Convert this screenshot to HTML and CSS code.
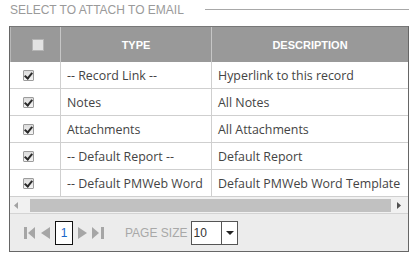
FILE: index.html
```html
<!DOCTYPE html>
<html lang="en">

<head>
  <meta charset="UTF-8">
  <meta name="viewport" content="width=device-width, initial-scale=1.0">
  <title>Attach to Email</title>
  <link rel="stylesheet" href="styles.css">
</head>

<body>
  <div class="panel">
    <div class="legend"><span>Select to attach to email</span></div>

    <div class="grid">
      <div class="head">
        <div class="cell check-cell head-check">
          <svg class="box-empty" width="12" height="12" viewBox="0 0 12 12">
            <rect x="0.5" y="0.5" width="11" height="11" fill="#e2e2e2" stroke="#b4b4b4"/>
          </svg>
        </div>
        <div class="cell">Type</div>
        <div class="cell">Description</div>
      </div>

      <div class="row">
        <div class="cell check-cell"><span class="tick"></span></div>
        <div class="cell">-- Record Link --</div>
        <div class="cell">Hyperlink to this record</div>
      </div>
      <div class="row">
        <div class="cell check-cell"><span class="tick"></span></div>
        <div class="cell">Notes</div>
        <div class="cell">All Notes</div>
      </div>
      <div class="row">
        <div class="cell check-cell"><span class="tick"></span></div>
        <div class="cell">Attachments</div>
        <div class="cell">All Attachments</div>
      </div>
      <div class="row">
        <div class="cell check-cell"><span class="tick"></span></div>
        <div class="cell">-- Default Report --</div>
        <div class="cell">Default Report</div>
      </div>
      <div class="row">
        <div class="cell check-cell"><span class="tick"></span></div>
        <div class="cell"><span class="clip">-- Default PMWeb Word</span></div>
        <div class="cell">Default PMWeb Word Template</div>
      </div>

      <!-- horizontal scrollbar -->
      <div class="hscroll">
        <svg width="4" height="7" viewBox="0 0 4 7"><path d="M4 0 L0 3.5 L4 7 Z" fill="#a3a3a3"/></svg>
        <div class="thumb"></div>
        <svg width="4" height="7" viewBox="0 0 4 7"><path d="M0 0 L4 3.5 L0 7 Z" fill="#505050"/></svg>
      </div>

      <div class="pager">
        <svg width="11" height="12" viewBox="0 0 11 12">
          <rect x="0" y="0" width="3" height="12" fill="#a6a6a6"/>
          <path d="M11 0 L4 6 L11 12 Z" fill="#a6a6a6"/>
        </svg>
        <svg width="9" height="12" viewBox="0 0 9 12"><path d="M9 0 L0 6 L9 12 Z" fill="#a6a6a6"/></svg>
        <span class="page-num">1</span>
        <svg width="9" height="12" viewBox="0 0 9 12"><path d="M0 0 L9 6 L0 12 Z" fill="#a6a6a6"/></svg>
        <svg width="12" height="12" viewBox="0 0 12 12">
          <path d="M0 0 L7 6 L0 12 Z" fill="#a6a6a6"/>
          <rect x="9" y="0" width="3" height="12" fill="#a6a6a6"/>
        </svg>
        <span class="page-size-label">Page size</span>
        <div class="page-size">
          <span class="value">10</span>
          <span class="arrow">
            <svg width="8" height="4" viewBox="0 0 8 4"><path d="M0 0 L8 0 L4 4 Z" fill="#222"/></svg>
          </span>
        </div>
      </div>
    </div>
  </div>
</body>

</html>
```

FILE: styles.css
```css
body {
  margin: 0;
  font-family: "Liberation Sans", Arial, sans-serif;
  background: #fff;
}

.panel {
  margin-left: 9px;
  width: 400px;
}

.legend {
  display: flex;
  align-items: flex-start;
  height: 26px;
  padding-left: 1px;
  font-size: 12px;
  color: #9a9a9a;
  text-transform: uppercase;
}

.legend span {
  padding-top: 3px;
  line-height: 14px;
}

.legend::after {
  content: "";
  flex: 1;
  margin-top: 9px;
  margin-left: 21px;
  border-top: 1px solid #a8a8a8;
}

.grid {
  width: 400px;
  box-sizing: border-box;
  border: 1px solid #666;
  border-top-color: #777;
}

.head,
.row {
  display: grid;
  grid-template-columns: 50px 151px 197px;
}

.head {
  height: 35px;
  background: #999;
  color: #fff;
  font-size: 11px;
  font-weight: bold;
  text-transform: uppercase;
}

.head .cell {
  display: flex;
  align-items: center;
  justify-content: center;
  border-left: 1px solid #c6c6c6;
}

.head .cell:first-child {
  border-left: 1px solid #b8b8b8;
}

.head .head-check {
  justify-content: flex-start;
  padding-left: 21px;
}

.row {
  height: 27px;
  box-sizing: border-box;
  border-bottom: 1px solid #cfcfcf;
  font-family: "Open Sans", sans-serif;
  font-size: 12.4px;
  color: #444;
}

.row .cell {
  display: flex;
  align-items: center;
  min-width: 0;
  padding-left: 6px;
  border-left: 1px solid #cfcfcf;
  white-space: nowrap;
  overflow: hidden;
}

.row .cell:first-child {
  border-left: none;
}

.row .check-cell {
  padding-left: 13px;
}

.clip {
  overflow: hidden;
}

.tick {
  position: relative;
  width: 11px;
  height: 11px;
  box-sizing: border-box;
  border: 1px solid #9c9c9c;
  border-radius: 1px;
  background: linear-gradient(#dcdcdc, #f4f4f4);
}

.tick::after {
  content: "";
  position: absolute;
  left: 2px;
  top: 0;
  width: 3px;
  height: 6px;
  border: solid #2a2a2a;
  border-width: 0 2px 2px 0;
  transform: rotate(40deg);
}

.hscroll {
  display: flex;
  align-items: center;
  height: 16px;
  padding: 0 7px 0 4px;
  background: #f1f1f1;
}

.hscroll .thumb {
  height: 13px;
  margin: 0 auto 0 12px;
  width: 361px;
  background: #c1c1c1;
}

.pager {
  display: flex;
  align-items: center;
  height: 38px;
  padding-left: 14px;
  background: #ececec;
  border-top: 1px solid #d4d4d4;
  box-sizing: border-box;
}

.pager svg {
  margin-right: 5px;
}

.pager svg:first-child {
  margin-right: 6px;
}

.page-num {
  width: 18px;
  height: 24px;
  box-sizing: border-box;
  border: 1px solid #111;
  background: #fff;
  margin-right: 5px;
  font-size: 12px;
  line-height: 22px;
  text-align: center;
  color: #1a66c9;
}

.page-size-label {
  margin-left: 16px;
  font-size: 12px;
  color: #a8a8a8;
  text-transform: uppercase;
}

.page-size {
  display: flex;
  margin-left: 4px;
  width: 47px;
  height: 24px;
  box-sizing: border-box;
  border: 1px solid #555;
  background: #fff;
}

.page-size .value {
  width: 28px;
  padding-left: 1px;
  font-size: 12px;
  line-height: 22px;
  color: #333;
}

.page-size .arrow {
  display: flex;
  align-items: center;
  justify-content: center;
  flex: 1;
  border-left: 1px solid #555;
}

.page-size .arrow svg {
  margin: 0;
}
```
